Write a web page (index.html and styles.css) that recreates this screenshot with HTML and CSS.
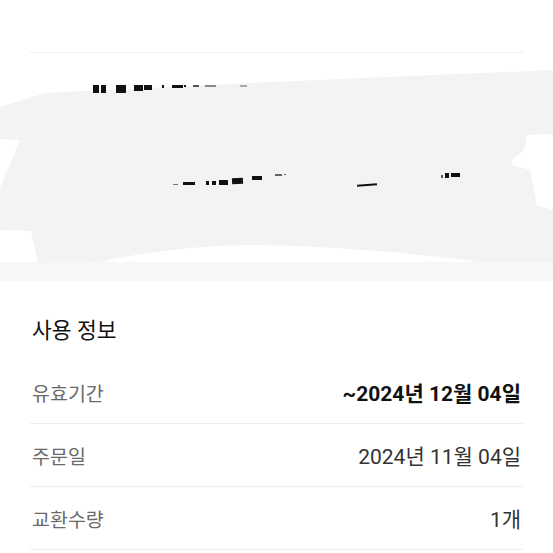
FILE: index.html
```html
<!DOCTYPE html>
<html lang="ko">
<head>
    <meta charset="UTF-8">
    <meta name="viewport" content="width=device-width, initial-scale=1.0">
    <title>쿠폰 상세</title>
    <link rel="stylesheet" href="styles.css">
</head>
<body>
    <div class="top-bar"></div>

    <!-- Blurred / scribbled-out coupon area -->
    <div class="masked">
        <svg width="553" height="230" viewBox="0 53 553 230" aria-hidden="true">
            <rect x="0" y="262" width="553" height="19" fill="#f7f7f7"/>
            <path d="M0 107 L45 93 L250 83 L553 70 L553 134 L527 135 L524 150 L512 160 L512 165 L530 170 L537 205 L553 210 L553 262 L480 262 Q360 246 250 245 Q170 246 100 262 L38 263 L31 231 L0 230 L0 188 L20 140 L0 139 Z" fill="#f3f3f3"/>
            <g fill="#111">
                <rect x="93" y="85" width="6" height="8"/>
                <rect x="101" y="85" width="5" height="8"/>
                <rect x="116" y="85" width="10" height="8"/>
                <rect x="134" y="85" width="9" height="6"/>
                <rect x="144" y="85" width="8" height="5"/>
                <rect x="162" y="85" width="2" height="3"/>
                <rect x="172" y="85" width="11" height="3"/>
                <rect x="184" y="85" width="2" height="2"/>
                <rect x="193" y="85" width="6" height="2" fill="#555"/>
                <rect x="205" y="85" width="11" height="2" fill="#888"/>
                <rect x="240" y="85" width="7" height="2" fill="#aaa"/>

                <rect x="173" y="184" width="5" height="1" fill="#777"/>
                <rect x="183" y="182" width="12" height="3"/>
                <rect x="206" y="181" width="3" height="4"/>
                <rect x="212" y="181" width="4" height="4"/>
                <rect x="219" y="180" width="9" height="5"/>
                <rect x="232" y="178" width="11" height="6" transform="rotate(-3 237 181)"/>
                <rect x="252" y="176" width="10" height="4"/>
                <rect x="275" y="174" width="7" height="2" fill="#666"/>
                <rect x="284" y="174" width="2" height="1" fill="#666"/>
                <rect x="357" y="184" width="20" height="2" transform="rotate(-4 367 185)"/>
                <rect x="441" y="175" width="2" height="3" fill="#555"/>
                <rect x="445" y="173" width="4" height="5"/>
                <rect x="451" y="173" width="9" height="4"/>
            </g>
        </svg>
    </div>

    <section class="usage">
        <h2 class="usage-title">사용 정보</h2>
        <div class="info-row">
            <span class="info-label">유효기간</span>
            <span class="info-value strong">~2024년 12월 04일</span>
        </div>
        <div class="info-row">
            <span class="info-label">주문일</span>
            <span class="info-value">2024년 11월 04일</span>
        </div>
        <div class="info-row">
            <span class="info-label">교환수량</span>
            <span class="info-value">1개</span>
        </div>
    </section>
</body>
</html>
```

FILE: styles.css
```css
body {
    margin: 0;
    background-color: #ffffff;
    font-family: Roboto, "Noto Sans CJK KR", sans-serif;
    color: #222222;
}
.top-bar {
    height: 52px;
    margin: 0 30px;
    border-bottom: 1px solid #efefef;
}
.masked {
    height: 230px;
    overflow: hidden;
}
.masked svg {
    display: block;
}
.usage {
    padding: 0 30px 0 32px;
}
.usage-title {
    margin: 0;
    padding: 34px 0 16px;
    font-size: 21.5px;
    line-height: 28px;
    font-weight: 400;
    color: #111111;
}
.info-row {
    display: flex;
    justify-content: space-between;
    align-items: center;
    height: 62px;
    margin-left: -2px;
    padding-left: 2px;
    border-bottom: 1px solid #eeeeee;
}
.info-label {
    font-size: 19.5px;
    color: #6a6a6a;
}
.info-value {
    font-size: 21px;
    color: #333333;
    padding-right: 2px;
}
.info-value.strong {
    font-weight: 700;
    color: #111111;
}
```
